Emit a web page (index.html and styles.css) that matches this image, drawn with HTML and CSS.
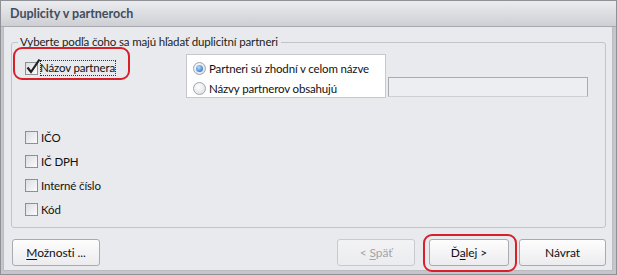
FILE: index.html
```html
<!DOCTYPE html>
<html>
<head>
<meta charset="utf-8">
<link rel="stylesheet" href="styles.css">
</head>
<body>
<div class="window">
  <div class="titlebar">Duplicity v partneroch</div>
  <div class="client">
    <fieldset class="group">
      <legend>Vyberte podľa čoho sa majú hľadať duplicitní partneri</legend>
      <div class="toprow">
        <label class="check first">
          <span class="box checked"><svg width="17" height="17" viewBox="0 0 17 17"><path d="M2.5 9.5 L6 14 L14.5 1.5" fill="none" stroke="#202020" stroke-width="2.2" stroke-linejoin="miter"/></svg></span>
          <span class="focus">Názov partnera</span>
          <span class="mark mark-name"></span>
        </label>
        <div class="radios">
          <label class="radio"><span class="dot on"></span>Partneri sú zhodní v celom názve</label>
          <label class="radio"><span class="dot"></span>Názvy partnerov obsahujú</label>
        </div>
        <div class="input"></div>
      </div>
      <div class="checks">
        <label class="check"><span class="box"></span>IČO</label>
        <label class="check"><span class="box"></span>IČ DPH</label>
        <label class="check"><span class="box"></span>Interné číslo</label>
        <label class="check"><span class="box"></span>Kód</label>
      </div>
    </fieldset>
    <div class="buttons">
      <button class="btn wide"><u>M</u>ožnosti ...</button>
      <div class="spacer"></div>
      <button class="btn nav disabled">&lt; <u>S</u>päť</button>
      <button class="btn nav next">Ď<u>a</u>lej &gt;<span class="mark mark-next"></span></button>
      <button class="btn cancel">Návrat</button>
    </div>
  </div>
</div>
</body>
</html>
```
FILE: styles.css
```css
* { box-sizing: border-box; }
html, body { margin: 0; padding: 0; }
body {
  width: 617px;
  height: 275px;
  font-family: "Lato", "Open Sans", sans-serif;
  font-size: 11.5px;
  letter-spacing: -0.15px;
  color: #111;
  background: #c9cbd0;
}
.window {
  width: 617px;
  height: 275px;
  border: 1px solid #8f9196;
  background: #c4c6cb;
  display: flex;
  flex-direction: column;
}
.titlebar {
  height: 26px;
  flex: none;
  background: linear-gradient(#ebecef, #cdcfd4);
  border-bottom: 1px solid #a7a9ae;
  padding-left: 9px;
  display: flex;
  align-items: center;
  font-weight: bold;
  font-size: 12.5px;
  letter-spacing: 0;
  color: #3f4d5f;
}
.client {
  flex: 1;
  margin: 0 3px 3px 2px;
  background: #e9eaee;
  border: 1px solid #babcc2;
  border-top: none;
  display: flex;
  flex-direction: column;
  padding: 7px 6px 0 7px;
}
.group {
  margin: 0;
  border: 1px solid #c2c4c9;
  border-radius: 3px;
  padding: 0 12px 0 13px;
  height: 194px;
  min-width: 0;
}
.group legend {
  padding: 0 3px 0 2px;
  margin-left: -7px;
  color: #222;
  line-height: 16px;
}
.toprow {
  display: flex;
  align-items: flex-start;
  margin-top: 4px;
}
.check {
  display: flex;
  align-items: center;
  height: 16px;
  position: relative;
  white-space: nowrap;
}
.box {
  width: 13px;
  height: 13px;
  border: 1px solid #8d9096;
  background: linear-gradient(135deg, #dcdde1, #fbfbfc);
  margin-right: 3px;
  flex: none;
  position: relative;
}
.first .box { margin-right: 2px; }
.box svg {
  position: absolute;
  left: -1px;
  top: -5px;
}
.first { margin-top: 6px; width: 161px; }
.focus {
  outline: 1px dotted #333;
  outline-offset: -1px;
  padding: 0 1px 0 0;
  line-height: 16px;
}
.radios {
  width: 200px;
  height: 44px;
  background: #fff;
  border: 1px solid #c6c8cd;
  padding: 5px 0 0 6px;
  display: flex;
  flex-direction: column;
  gap: 4px;
  flex: none;
}
.radio {
  display: flex;
  align-items: center;
  height: 16px;
  white-space: nowrap;
}
.dot {
  flex: none;
  width: 13px;
  height: 13px;
  border-radius: 50%;
  border: 1px solid #a2a5ab;
  background: radial-gradient(circle at 40% 35%, #ffffff, #d9dadf);
  margin-right: 3px;
  position: relative;
}
.dot.on::after {
  content: "";
  position: absolute;
  left: 2px;
  top: 2px;
  width: 7px;
  height: 7px;
  border-radius: 50%;
  background: radial-gradient(circle at 40% 35%, #b8dcfa, #3f86d4 70%, #2a64b3);
}
.input {
  width: 200px;
  height: 20px;
  margin: 23px 0 0 2px;
  border: 1px solid #a9abb1;
  border-bottom-color: #cdd0d5;
  background: #eceef1;
  flex: none;
}
.checks {
  display: flex;
  flex-direction: column;
  gap: 8px;
  margin-top: 31px;
}
.buttons {
  display: flex;
  align-items: center;
  margin-top: 11px;
  padding-left: 1px;
}
.spacer { flex: 1; }
.btn {
  font-family: inherit;
  font-size: 12px;
  letter-spacing: -0.1px;
  height: 27px;
  border: 1px solid #a9abb1;
  border-radius: 3px;
  background: linear-gradient(#fdfdfd, #ececef);
  color: #111;
  padding: 0;
  position: relative;
}
.btn u { text-decoration-thickness: 1px; text-underline-offset: 2px; }
.wide { width: 88px; }
.nav { width: 78px; }
.disabled { color: #a3a5a9; border-color: #c8cacf; background: linear-gradient(#f3f3f5, #ebecef); }
.next { margin-left: 14px; width: 80px; }
.cancel { width: 87px; margin-left: 10px; }
.mark {
  position: absolute;
  border: 2px solid #d8202a;
  border-radius: 9px;
  pointer-events: none;
}
.mark-name { left: -12px; top: -13px; width: 117px; height: 33px; }
.mark-next { left: -7px; top: -6px; width: 94px; height: 38px; }
```
